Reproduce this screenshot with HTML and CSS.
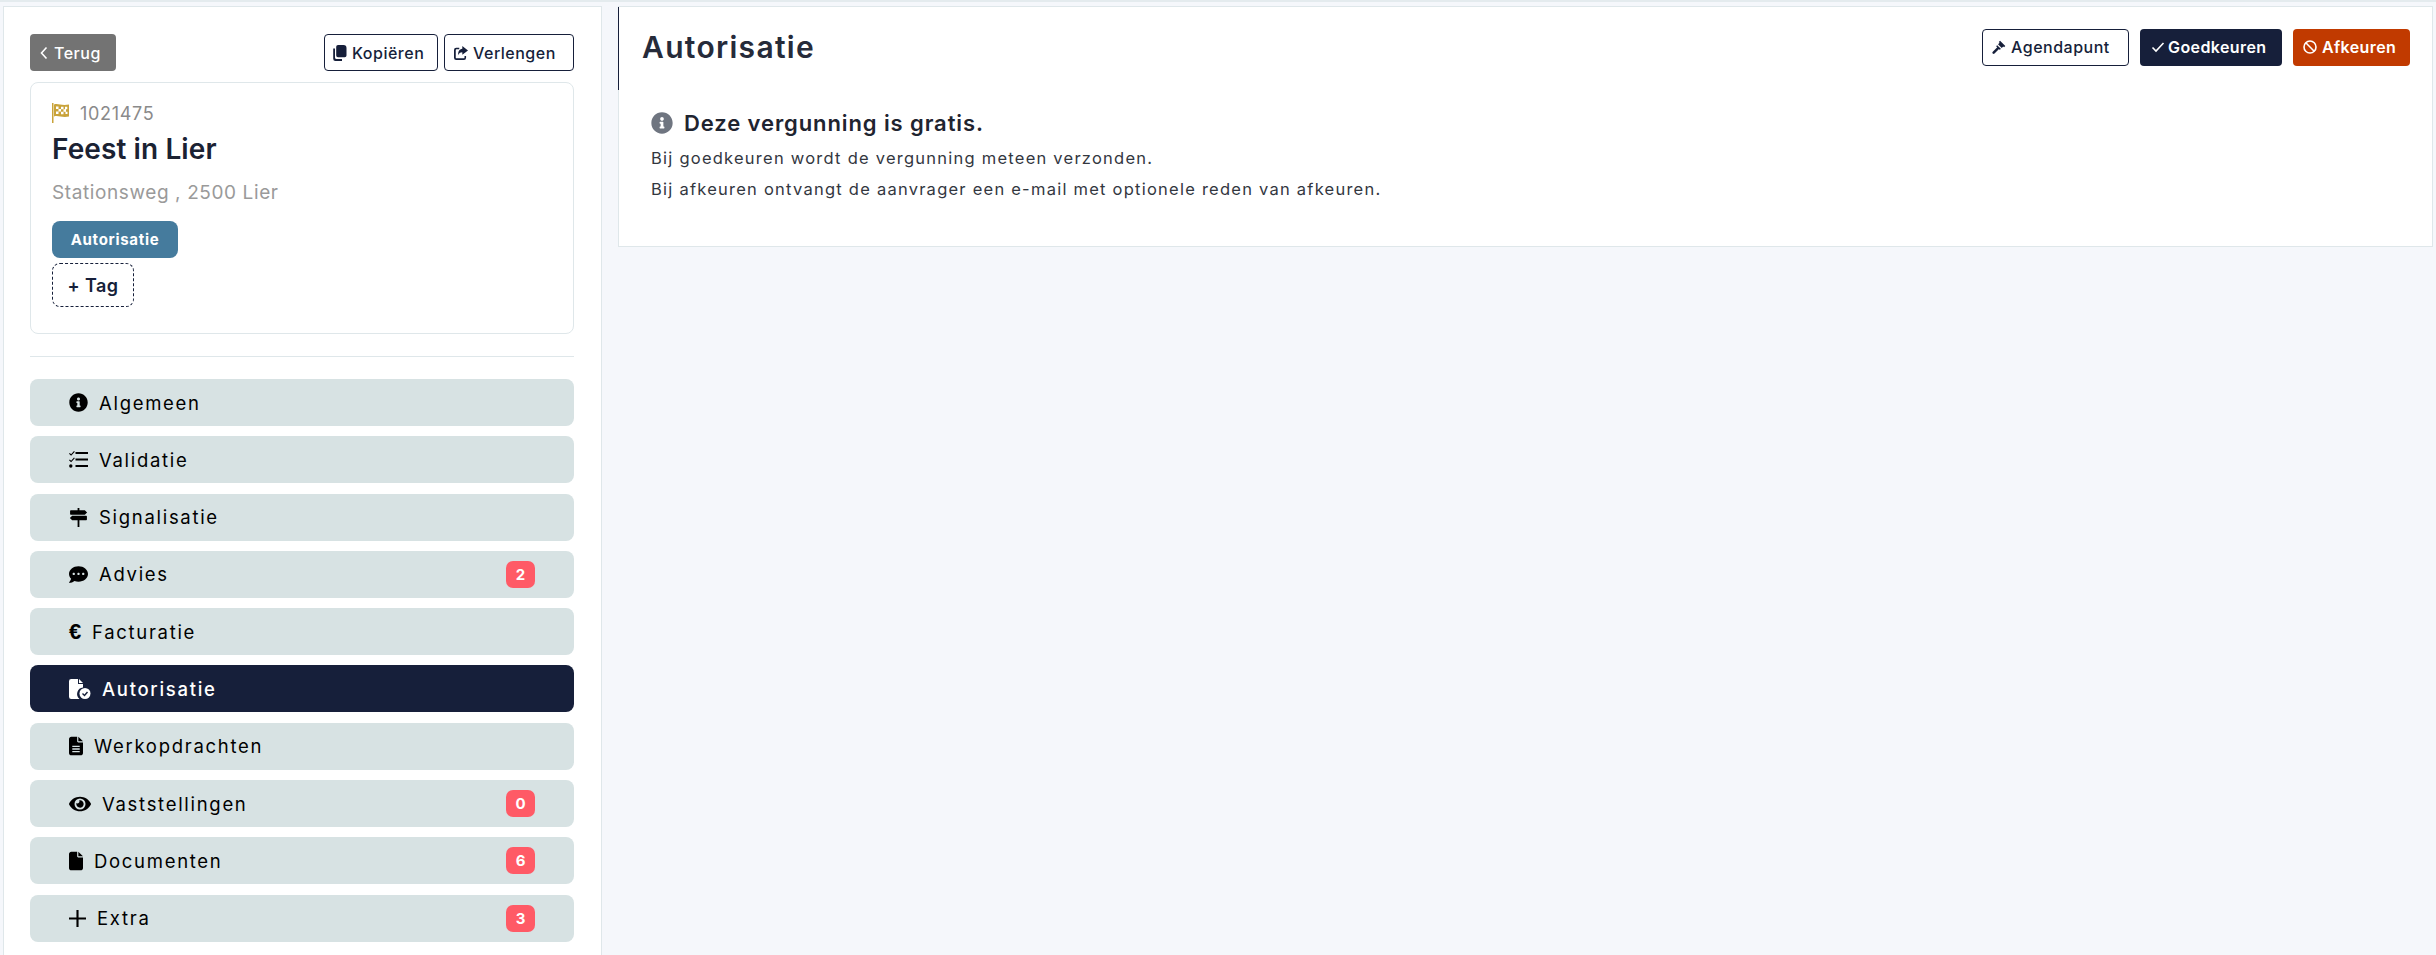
FILE: index.html
```html
<!DOCTYPE html>
<html lang="nl">
<head>
    <meta charset="UTF-8">
    <title>Autorisatie</title>
    <link rel="stylesheet" href="styles.css">
</head>
<body>
    <div class="page">
        <aside class="sidebar">
            <div class="top-actions">
                <button class="btn btn-back">
                    <svg class="ico-chevron" viewBox="0 0 8 14"><path d="M6.500 1.500 1.500 7l5 5.500"/></svg>Terug
                </button>
                <div class="top-actions-right">
                    <button class="btn btn-outline btn-copy">
                        <svg class="ico-sm" viewBox="0 0 14 16"><path d="M5 0h5.500a3 3 0 0 1 3 3v7.500a1.800 1.800 0 0 1-1.800 1.800H5a1.800 1.800 0 0 1-1.800-1.800V1.800A1.800 1.800 0 0 1 5 0z"/><path d="M2 3.500v9.300c0 .7.500 1.200 1.200 1.200H9v2H2.400A2.200 2.200 0 0 1 .2 13.800V3.500z"/></svg>Kopiëren
                    </button>
                    <button class="btn btn-outline btn-extend">
                        <svg class="ico-sm" viewBox="0 0 16 16"><path d="M9.500 0 16 5l-6.500 5V7C7 7 5.500 8 5 10.500 4.200 7 6 3.500 9.500 3.200z"/><path d="M2.500 2H6v1.800H3a1 1 0 0 0-1 1V13a1 1 0 0 0 1 1h8a1 1 0 0 0 1-1v-1.500h1.800V13.500a2.500 2.500 0 0 1-2.500 2.500H2.500A2.500 2.500 0 0 1 0 13.500v-9A2.500 2.500 0 0 1 2.500 2z"/></svg>Verlengen
                    </button>
                </div>
            </div>

            <section class="dossier">
                <div class="dossier-number">
                    <svg class="ico-flag" viewBox="0 0 17 20">
                        <path d="M0 0h1.500v20H0z"/>
                        <path d="M2 1.500c4-1.500 7 1.500 15 0v12c-7 1.500-11-1.500-15 0z"/>
                        <path class="flag-check" d="M4 3.500h2.500V6H4zM9 3.800h2.500v2.500H9zM13 3.800h2.300v2.500H13zM6.500 6H9v2.500H6.500zM11.500 6.300H14v2.500h-2.500zM4 8.500h2.500V11H4zM9 8.800h2.500v2.500H9zM13.500 8.800H15.500v2.300h-2z"/>
                    </svg>
                    <span>1021475</span>
                </div>
                <h1 class="dossier-title">Feest in Lier</h1>
                <p class="dossier-address">Stationsweg , 2500 Lier</p>
                <span class="tag">Autorisatie</span>
                <button class="tag-add">+ Tag</button>
            </section>

            <hr class="divider">

            <nav class="menu">
                <a class="menu-item">
                    <svg class="icon w19" viewBox="0 0 512 512"><path d="M256 8C119.043 8 8 119.083 8 256c0 136.997 111.043 248 248 248s248-111.003 248-248C504 119.083 392.957 8 256 8zm0 110c23.196 0 42 18.804 42 42s-18.804 42-42 42-42-18.804-42-42 18.804-42 42-42zm56 254c0 6.627-5.373 12-12 12h-88c-6.627 0-12-5.373-12-12v-24c0-6.627 5.373-12 12-12h12v-64h-12c-6.627 0-12-5.373-12-12v-24c0-6.627 5.373-12 12-12h64c6.627 0 12 5.373 12 12v100h12c6.627 0 12 5.373 12 12v24z"/></svg>
                    <span>Algemeen</span>
                </a>
                <a class="menu-item">
                    <svg class="icon w19" viewBox="0 0 19 17"><path d="M6.500 1h12.500v2H6.500zM6.500 7.500h12.500v2H6.500zM6.500 14h12.500v2H6.500z"/><path d="M.8 2.500l1.300 1.300L5 .5l.8.8-3.700 4L0 3.300zM.8 9l1.300 1.300L5 7l.8.8-3.700 4L0 9.800z" transform="translate(0 -.5)"/><circle cx="1.800" cy="15" r="1.700"/></svg>
                    <span>Validatie</span>
                </a>
                <a class="menu-item">
                    <svg class="icon w19" viewBox="0 0 19 21"><path d="M8.500 0h2v3h-2zM8.500 13h2v8h-2zM1 2.500h15.500L19 5l-2.500 2.500H1a.8.800 0 0 1-.8-.8V3.300A.8.800 0 0 1 1 2.500zM2.500 8.500H18a.8.800 0 0 1 .8.800v3.400a.8.800 0 0 1-.8.800H2.500L0 11z"/></svg>
                    <span>Signalisatie</span>
                </a>
                <a class="menu-item">
                    <svg class="icon w19" viewBox="0 0 512 512"><path d="M256 32C114.600 32 0 125.100 0 240c0 49.600 21.400 95 57 130.700C44.500 421.100 2.700 466 2.200 466.500c-2.200 2.300-2.800 5.700-1.500 8.700S4.800 480 8 480c66.300 0 116-31.800 140.600-51.400 32.700 12.300 69 19.400 107.400 19.400 141.400 0 256-93.100 256-208S397.400 32 256 32zM128 272c-17.700 0-32-14.300-32-32s14.300-32 32-32 32 14.300 32 32-14.300 32-32 32zm128 0c-17.700 0-32-14.300-32-32s14.300-32 32-32 32 14.300 32 32-14.300 32-32 32zm128 0c-17.700 0-32-14.300-32-32s14.300-32 32-32 32 14.300 32 32-14.300 32-32 32z"/></svg>
                    <span>Advies</span>
                    <b class="badge">2</b>
                </a>
                <a class="menu-item">
                    <i class="icon-euro">€</i>
                    <span>Facturatie</span>
                </a>
                <a class="menu-item active">
                    <svg class="icon w22" viewBox="0 0 22 20"><path d="M0 2.200A2.200 2.200 0 0 1 2.200 0H9v5h5v3.500a6.500 6.500 0 0 0-3.500 11.500H2.200A2.200 2.200 0 0 1 0 17.800z"/><path d="M10 0l4 4h-4z"/><circle cx="16" cy="14.500" r="5.500"/><path class="check-cut" d="M13.500 14.500l2 2 3-3.500"/></svg>
                    <span>Autorisatie</span>
                </a>
                <a class="menu-item">
                    <svg class="icon w14" viewBox="0 0 384 512"><path d="M0 64C0 28.700 28.700 0 64 0H224V128c0 17.700 14.300 32 32 32H384V448c0 35.300-28.700 64-64 64H64c-35.300 0-64-28.700-64-64V64zm384 64H256V0L384 128z"/><path class="file-lines" d="M90 250h204v36H90zM90 320h204v36H90zM90 390h204v36H90z"/></svg>
                    <span>Werkopdrachten</span>
                </a>
                <a class="menu-item">
                    <svg class="icon w22" viewBox="0 0 576 512"><path d="M572.520 241.400C518.290 135.590 410.930 64 288 64S57.680 135.640 3.480 241.410a32.350 32.350 0 0 0 0 29.190C57.710 376.410 165.070 448 288 448s230.320-71.640 284.520-177.410a32.350 32.350 0 0 0 0-29.190zM288 400a144 144 0 1 1 144-144 143.930 143.930 0 0 1-144 144zm0-240a95.310 95.310 0 0 0-25.310 3.790 47.850 47.850 0 0 1-66.900 66.900A95.780 95.780 0 1 0 288 160z"/></svg>
                    <span>Vaststellingen</span>
                    <b class="badge">0</b>
                </a>
                <a class="menu-item">
                    <svg class="icon w14" viewBox="0 0 384 512"><path d="M0 64C0 28.700 28.700 0 64 0H224V128c0 17.700 14.300 32 32 32H384V448c0 35.300-28.700 64-64 64H64c-35.300 0-64-28.700-64-64V64zm384 64H256V0L384 128z"/></svg>
                    <span>Documenten</span>
                    <b class="badge">6</b>
                </a>
                <a class="menu-item">
                    <svg class="icon w17" viewBox="0 0 16 16"><path d="M7 0h2v7h7v2H9v7H7V9H0V7h7z"/></svg>
                    <span>Extra</span>
                    <b class="badge">3</b>
                </a>
            </nav>
        </aside>

        <main class="content">
            <div class="panel">
                <header class="panel-head">
                    <h2 class="panel-title">Autorisatie</h2>
                    <div class="panel-actions">
                        <button class="btn btn-outline btn-agenda">
                            <svg class="ico-sm" viewBox="0 0 16 16"><path d="M9.200.8 15.200 6.800 13.800 8.200 12.900 7.300 11.100 9.100 6.900 4.900 8.700 3.100 7.800 2.200z"/><path d="M5.900 5.900 10.100 10.100 8.900 11.300 8 10.400 2.900 15.500a1.400 1.400 0 0 1-2-0 1.400 1.400 0 0 1 0-2L6 8.400 4.700 7.100z"/></svg>Agendapunt
                        </button>
                        <button class="btn btn-dark">
                            <svg class="ico-stroke" viewBox="0 0 14 14"><path d="M1.500 7.500 5 11l7.500-8"/></svg>Goedkeuren
                        </button>
                        <button class="btn btn-reject">
                            <svg class="ico-stroke" viewBox="0 0 14 14"><circle cx="7" cy="7" r="6"/><path d="M2.800 2.800l8.400 8.400"/></svg>Afkeuren
                        </button>
                    </div>
                </header>
                <div class="panel-body">
                    <h3 class="notice">
                        <svg class="ico-notice" viewBox="0 0 512 512"><path d="M256 8C119.043 8 8 119.083 8 256c0 136.997 111.043 248 248 248s248-111.003 248-248C504 119.083 392.957 8 256 8zm0 110c23.196 0 42 18.804 42 42s-18.804 42-42 42-42-18.804-42-42 18.804-42 42-42zm56 254c0 6.627-5.373 12-12 12h-88c-6.627 0-12-5.373-12-12v-24c0-6.627 5.373-12 12-12h12v-64h-12c-6.627 0-12-5.373-12-12v-24c0-6.627 5.373-12 12-12h64c6.627 0 12 5.373 12 12v100h12c6.627 0 12 5.373 12 12v24z"/></svg>
                        Deze vergunning is gratis.
                    </h3>
                    <p>Bij goedkeuren wordt de vergunning meteen verzonden.</p>
                    <p>Bij afkeuren ontvangt de aanvrager een e-mail met optionele reden van afkeuren.</p>
                </div>
            </div>
        </main>
    </div>
</body>
</html>
```
FILE: styles.css
```css
* {
    box-sizing: border-box;
}
html, body {
    height: 100%;
}
body {
    margin: 0;
    font-family: Inter, "Liberation Sans", sans-serif;
    color: #161f3a;
    background-color: #f5f7fb;
    overflow: hidden;
}
.page {
    display: flex;
    align-items: flex-start;
    height: 955px;
    padding: 6px 3px 0 3px;
    border-top: 2px solid #e4ebee;
}

/* sidebar */
.sidebar {
    width: 599px;
    height: 960px;
    flex-shrink: 0;
    margin-top: -2px;
    padding: 27px 27px 0 26px;
    background-color: #fff;
    border: 1px solid #dfe7ea;
}
.top-actions {
    display: flex;
    justify-content: space-between;
    margin-bottom: 11px;
}
.top-actions-right {
    display: flex;
    gap: 6px;
}
button {
    font-family: inherit;
    cursor: pointer;
}
.btn {
    display: inline-flex;
    align-items: center;
    height: 37px;
    padding: 0 10px;
    font-size: 16px;
    font-weight: 500;
    letter-spacing: 0.5px;
    border-radius: 4px;
    border: 1px solid transparent;
    white-space: nowrap;
}
.btn-back {
    width: 86px;
    padding-left: 9px;
    color: #fff;
    background-color: #737373;
}
.btn-outline {
    color: #161f3a;
    background-color: #fff;
    border-color: #161f3a;
}
.btn-copy {
    width: 114px;
    padding-left: 8px;
}
.btn-extend {
    width: 130px;
    padding-left: 9px;
}
.btn-dark {
    width: 142px;
    padding-left: 10px;
    font-weight: 600;
    letter-spacing: 0.4px;
    color: #fff;
    background-color: #161f3a;
}
.btn-dark .ico-stroke {
    margin-right: 3px;
}
.btn-reject {
    width: 117px;
    padding-left: 9px;
    font-weight: 600;
    letter-spacing: 0.4px;
    color: #fff;
    background-color: #c13a00;
}
.ico-chevron {
    width: 8px;
    height: 14px;
    margin-right: 6px;
    fill: none;
    stroke: #fff;
    stroke-width: 1.6;
}
.ico-sm {
    width: 14px;
    height: 16px;
    margin-right: 5px;
    flex-shrink: 0;
    fill: #161f3a;
}
.ico-stroke {
    width: 14px;
    height: 14px;
    margin-right: 5px;
    flex-shrink: 0;
    fill: none;
    stroke: #fff;
    stroke-width: 1.6;
}

/* dossier card */
.dossier {
    height: 252px;
    padding: 20px 21px 0 21px;
    border: 1px solid #dfe7ea;
    border-radius: 8px;
}
.dossier-number {
    display: flex;
    align-items: center;
    gap: 11px;
    height: 20px;
    font-size: 18px;
    letter-spacing: 0.7px;
    color: #8a8a8a;
}
.ico-flag {
    width: 17px;
    height: 20px;
    fill: #c9a33a;
}
.flag-check {
    fill: #fff;
}
.dossier-title {
    margin: 6px 0 0;
    font-size: 28px;
    line-height: 40px;
    font-weight: 600;
    letter-spacing: 0.1px;
    color: #1b2233;
}
.dossier-address {
    margin: 12px 0 0;
    font-size: 19px;
    line-height: 24px;
    letter-spacing: 0.6px;
    color: #9a9a9a;
}
.tag {
    display: flex;
    align-items: center;
    justify-content: center;
    width: 126px;
    height: 37px;
    margin-top: 16px;
    font-size: 15px;
    font-weight: 700;
    letter-spacing: 0.7px;
    color: #fff;
    background-color: #457b9d;
    border-radius: 8px;
}
.tag-add {
    display: block;
    width: 82px;
    height: 44px;
    margin-top: 5px;
    padding: 0;
    font-size: 18px;
    font-weight: 600;
    letter-spacing: 0.4px;
    color: #161f3a;
    background-color: #fff;
    border: 1px dashed #161f3a;
    border-radius: 8px;
}
.divider {
    height: 1px;
    margin: 22px 0 22px;
    border: none;
    background-color: #dfe7ea;
}

/* menu */
.menu-item {
    display: flex;
    align-items: center;
    height: 47px;
    margin-bottom: 10.3px;
    padding: 0 39px;
    font-size: 18.5px;
    font-weight: 400;
    letter-spacing: 1.7px;
    color: #000;
    background-color: #d7e2e3;
    border-radius: 8px;
}
.menu-item.active {
    font-weight: 500;
    color: #fff;
    background-color: #161f3a;
}
.icon {
    height: 19px;
    margin-right: 11px;
    flex-shrink: 0;
    fill: currentColor;
}
.w14 { width: 14px; height: 22px; }
.w17 { width: 17px; height: 17px; }
.w19 { width: 19px; }
.w22 { width: 22px; height: 22px; }
.icon-euro {
    width: 12px;
    margin-right: 11px;
    font-family: "Liberation Sans", sans-serif;
    font-style: normal;
    font-weight: 700;
    font-size: 22px;
    letter-spacing: 0;
}
.check-cut {
    fill: none;
    stroke: #161f3a;
    stroke-width: 1.4;
}
.file-lines {
    fill: #d7e2e3;
}
.badge {
    display: flex;
    align-items: center;
    justify-content: center;
    width: 29px;
    height: 27px;
    margin-left: auto;
    font-size: 15px;
    font-weight: 700;
    letter-spacing: 0;
    color: #fff;
    background-color: #ff5a66;
    border-radius: 7px;
}

/* main panel */
.content {
    flex: 1;
    margin-left: 16px;
}
.panel {
    height: 241px;
    margin-top: -2px;
    background-color: #fff;
    border: 1px solid #dfe7ea;
}
.panel-head {
    display: flex;
    align-items: center;
    justify-content: space-between;
    height: 83px;
    padding: 0 22px 3px 23px;
    margin-left: -1px;
    border-left: 1px solid #161f3a;
}
.panel-title {
    margin: 0;
    font-size: 30px;
    font-weight: 600;
    letter-spacing: 1.3px;
    color: #262b3a;
}
.panel-actions {
    display: flex;
    gap: 11px;
}
.btn-agenda {
    width: 147px;
    padding-left: 9px;
}
.panel-body {
    padding: 22px 32px;
}
.notice {
    display: flex;
    align-items: center;
    gap: 11px;
    height: 22px;
    margin: 0 0 13px;
    font-size: 22px;
    font-weight: 600;
    letter-spacing: 0.9px;
    color: #1f2430;
}
.ico-notice {
    width: 22px;
    height: 22px;
    fill: #6f7580;
}
.panel-body p {
    margin: 0 0 8px;
    font-size: 16.5px;
    line-height: 23px;
    letter-spacing: 1.24px;
    color: #33373f;
}
```
